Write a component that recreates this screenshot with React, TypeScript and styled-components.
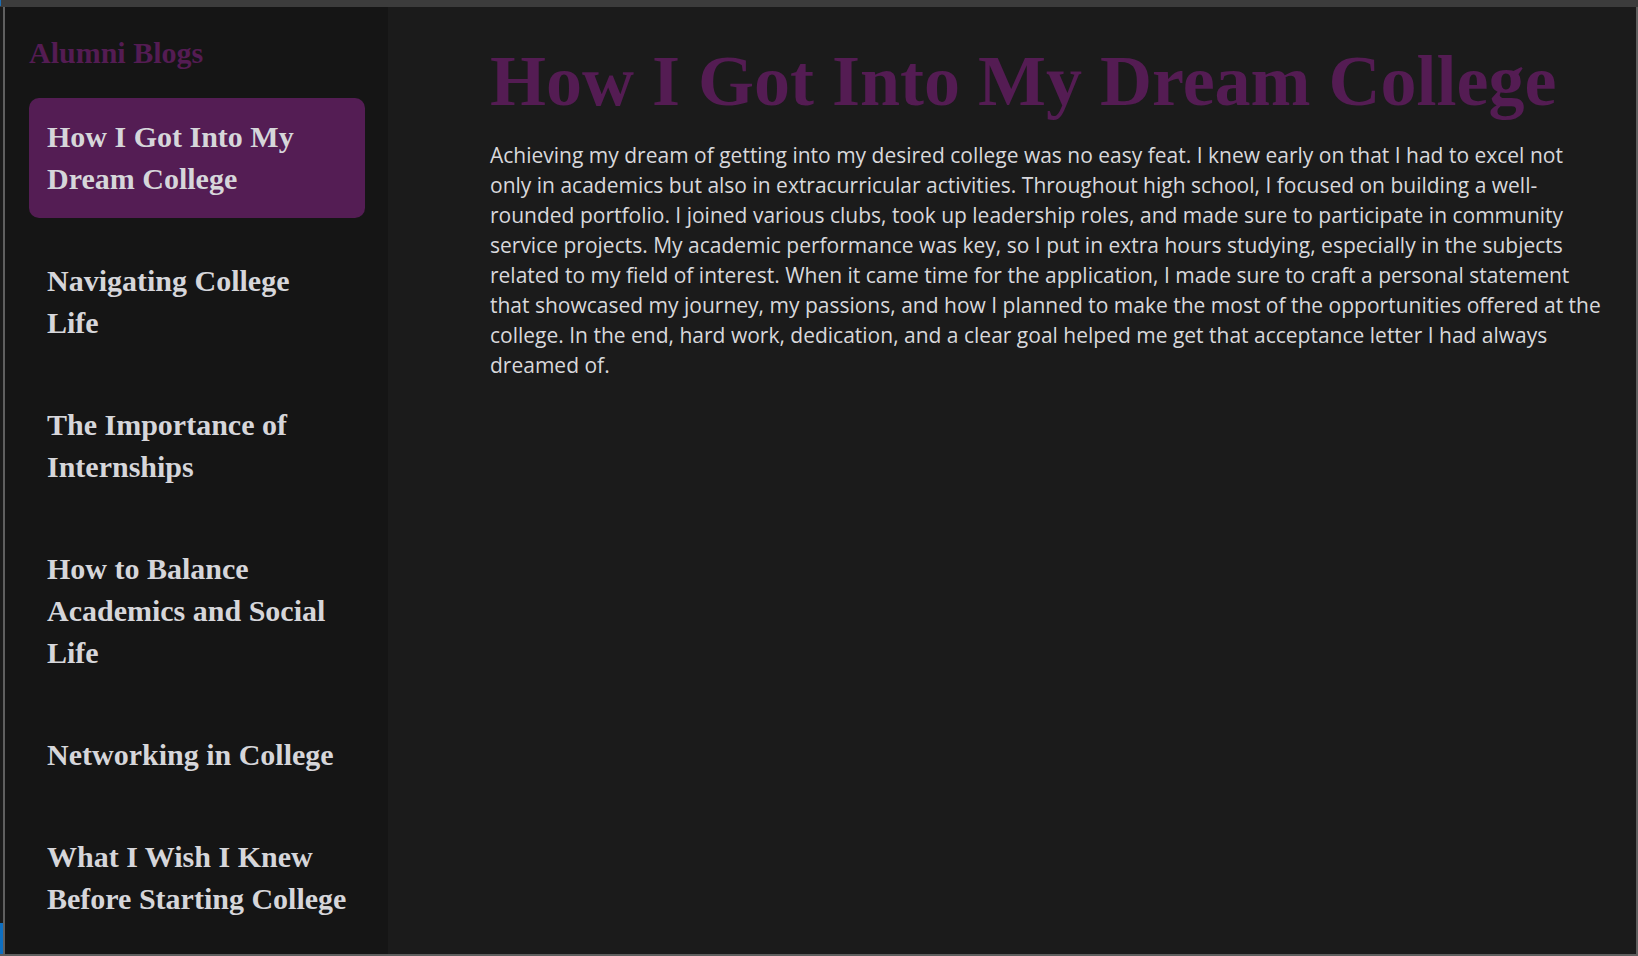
import React, { useState } from "react";
import styled, { createGlobalStyle } from "styled-components";

const GlobalStyle = createGlobalStyle`
  html, body {
    margin: 0;
    padding: 0;
    background: #1e1e1e;
  }
  * { box-sizing: border-box; }
`;

const Shell = styled.div`
  height: 100vh;
  display: flex;
  flex-direction: column;
  overflow: hidden;
`;

const TopBar = styled.div`
  height: 7px;
  flex: 0 0 7px;
  background: #3c3c3c;
  position: relative;
`;

const TopAccent = styled.span`
  position: absolute;
  left: 0;
  top: 0;
  width: 1px;
  height: 6px;
  background: #1c6db3;
`;

const Body = styled.div`
  flex: 1;
  min-height: 0;
  display: flex;
  border-bottom: 2px solid #5f5f5f;
`;

const EdgeStrip = styled.div`
  width: 3px;
  flex: 0 0 3px;
  background: #1a1a1a;
  position: relative;
`;

const EdgeAccent = styled.span`
  position: absolute;
  left: 0;
  bottom: 0;
  width: 3px;
  height: 31px;
  background: #0e6fc1;
`;

const Frame = styled.div`
  flex: 1;
  min-width: 0;
  display: flex;
  border-left: 2px solid #5f5f5f;
  border-right: 2px solid #5f5f5f;
`;

const Sidebar = styled.aside`
  width: 383px;
  flex: 0 0 383px;
  background: #151515;
  padding: 29px 23px 24px 24px;
  overflow: hidden;
  display: flex;
  flex-direction: column;
`;

const SidebarTitle = styled.h2`
  margin: 0 0 28px;
  font-family: "Liberation Serif", "Times New Roman", serif;
  font-weight: 700;
  font-size: 30px;
  line-height: normal;
  color: #541c53;
`;

const PostList = styled.nav`
  display: flex;
  flex-direction: column;
  gap: 24px;
`;

const PostItem = styled.div<{ $active: boolean }>`
  padding: 18px;
  border-radius: 10px;
  background: ${(p) => (p.$active ? "#541d54" : "transparent")};
  font-family: "Liberation Serif", "Times New Roman", serif;
  font-weight: 700;
  font-size: 30px;
  line-height: 42px;
  color: #d6d6da;
  cursor: pointer;
`;

const Main = styled.main`
  flex: 1;
  min-width: 0;
  background: #1b1b1b;
  padding: 33px 32px 0 102px;
  overflow: hidden;
`;

const ArticleTitle = styled.h1`
  margin: 0 0 17px;
  font-family: "Liberation Serif", "Times New Roman", serif;
  font-weight: 700;
  font-size: 72px;
  line-height: normal;
  color: #541c53;
  white-space: nowrap;
`;

const ArticleText = styled.p`
  margin: 0;
  font-family: "Open Sans", "Noto Sans", sans-serif;
  font-size: 21px;
  line-height: 30px;
  color: #d8d8dc;
`;

const posts = [
  {
    title: "How I Got Into My Dream College",
    body:
      "Achieving my dream of getting into my desired college was no easy feat. I knew early on that I had to excel not only in academics but also in extracurricular activities. Throughout high school, I focused on building a well-rounded portfolio. I joined various clubs, took up leadership roles, and made sure to participate in community service projects. My academic performance was key, so I put in extra hours studying, especially in the subjects related to my field of interest. When it came time for the application, I made sure to craft a personal statement that showcased my journey, my passions, and how I planned to make the most of the opportunities offered at the college. In the end, hard work, dedication, and a clear goal helped me get that acceptance letter I had always dreamed of.",
  },
  { title: "Navigating College Life", body: "" },
  { title: "The Importance of Internships", body: "" },
  { title: "How to Balance Academics and Social Life", body: "" },
  { title: "Networking in College", body: "" },
  { title: "What I Wish I Knew Before Starting College", body: "" },
];

export default function App() {
  const [active, setActive] = useState(0);
  const post = posts[active];
  return (
    <>
      <GlobalStyle />
      <Shell>
        <TopBar>
          <TopAccent />
        </TopBar>
        <Body>
          <EdgeStrip>
            <EdgeAccent />
          </EdgeStrip>
          <Frame>
            <Sidebar>
              <SidebarTitle>Alumni Blogs</SidebarTitle>
              <PostList>
                {posts.map((p, i) => (
                  <PostItem key={p.title} $active={i === active} onClick={() => setActive(i)}>
                    {p.title}
                  </PostItem>
                ))}
              </PostList>
            </Sidebar>
            <Main>
              <ArticleTitle>{post.title}</ArticleTitle>
              <ArticleText>{post.body}</ArticleText>
            </Main>
          </Frame>
        </Body>
      </Shell>
    </>
  );
}
